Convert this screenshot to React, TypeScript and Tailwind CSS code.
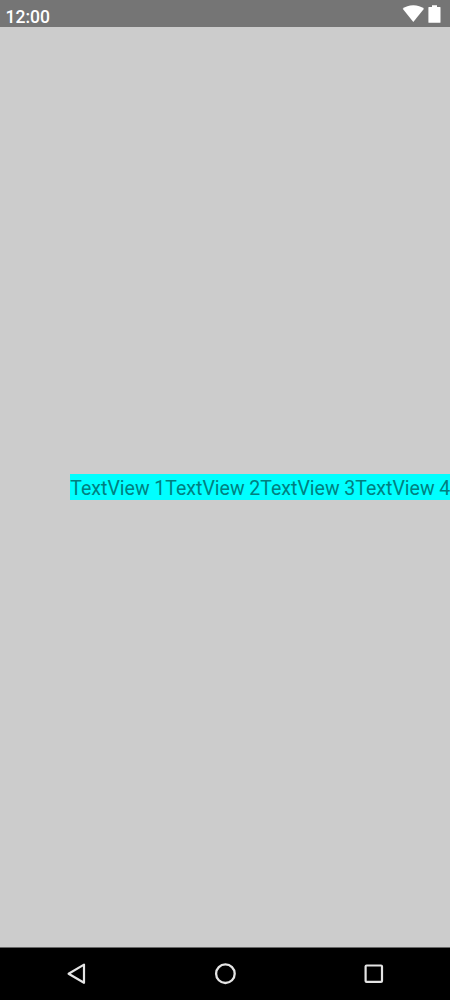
const labels = ["TextView 1", "TextView 2", "TextView 3", "TextView 4"];

function StatusBar() {
  return (
    <header className="flex h-[27px] shrink-0 items-start justify-between bg-[#757575] pl-[5.5px] pr-[9px] text-white">
      <span className="pt-[7px] text-[17.5px] leading-[21px] font-medium">12:00</span>
      <div className="flex gap-[4px] pt-[5px]">
        <svg width="22" height="18" viewBox="0 0 22 18" fill="currentColor" aria-hidden="true">
          <path d="M11.3 17 L0.7 3.8 C3.4 1.4 7 0.2 11.3 0.2 S19.3 1.4 22 3.8 Z" />
        </svg>
        <svg width="13" height="18" viewBox="0 0 13 18" fill="currentColor" aria-hidden="true">
          <path d="M4 0.2h5v1.7h3a.5.5 0 0 1 .5.5v14.9a.5.5 0 0 1-.5.5H.9a.5.5 0 0 1-.5-.5V2.4a.5.5 0 0 1 .5-.5H4z" />
        </svg>
      </div>
    </header>
  );
}

function NavigationBar() {
  return (
    <nav className="grid h-[53px] shrink-0 grid-cols-3 place-items-center border-t border-[#666666] bg-black px-[2px] text-[#e4e4e4]">
      <svg width="24" height="24" viewBox="0 0 24 24" fill="none" stroke="currentColor" strokeWidth="2.2" strokeLinejoin="round" aria-hidden="true">
        <path d="M20 2.6v18.2L4.6 11.7z" />
      </svg>
      <svg width="24" height="24" viewBox="0 0 24 24" fill="none" stroke="currentColor" strokeWidth="2.3" aria-hidden="true">
        <circle cx="12.4" cy="11.7" r="9.3" />
      </svg>
      <svg width="24" height="24" viewBox="0 0 24 24" fill="none" stroke="currentColor" strokeWidth="2.2" aria-hidden="true">
        <rect x="3.6" y="3.5" width="16.4" height="16.4" rx="1" />
      </svg>
    </nav>
  );
}

export default function App() {
  return (
    <div className="flex h-[1000px] w-[450px] flex-col overflow-hidden bg-[#cccccc] font-['Roboto',sans-serif]">
      <StatusBar />
      <main className="flex flex-1 items-center justify-end">
        <div className="flex h-[26.4px] w-[380px] bg-[#00ffff] text-[19.5px] leading-[30px] text-[#008080]">
          {labels.map((label) => (
            <span key={label} className="w-[95px] shrink-0 whitespace-nowrap pl-[0.3px]">{label}</span>
          ))}
        </div>
      </main>
      <NavigationBar />
    </div>
  );
}
